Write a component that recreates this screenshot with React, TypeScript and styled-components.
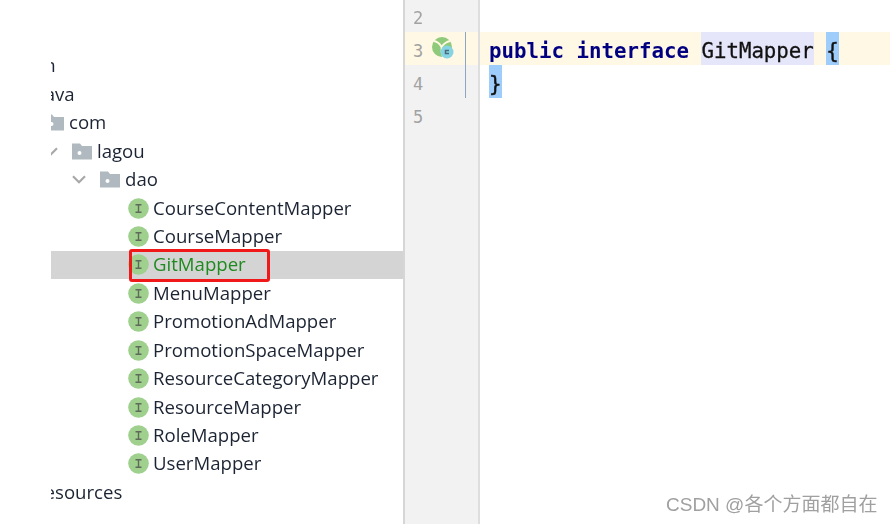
import React from "react";
import styled, { createGlobalStyle } from "styled-components";

const Global = createGlobalStyle`
  html, body { margin: 0; padding: 0; background: #fff; }
  #root { width: 893px; height: 524px; overflow: hidden; }
`;

const Page = styled.div`
  position: relative;
  display: flex;
  width: 893px;
  height: 524px;
  padding-left: 51px;
  padding-right: 3px;
  box-sizing: border-box;
  overflow: hidden;
  background: #fff;
`;

const Tree = styled.div`
  width: 352px;
  flex: none;
  padding-top: 51.6px;
  box-sizing: border-box;
  overflow: hidden;
  font-family: "Open Sans", "Noto Sans", sans-serif;
  font-size: 18.6px;
  color: #1c2433;
  filter: blur(0.3px);
`;

const Row = styled.div<{ $selected?: boolean }>`
  position: relative;
  height: 28.45px;
  background: ${(p) => (p.$selected ? "#d4d4d4" : "transparent")};
`;

const RowInner = styled.div<{ $x: number }>`
  display: flex;
  align-items: center;
  height: 100%;
  margin-left: ${(p) => p.$x}px;
  white-space: nowrap;
`;

const Label = styled.span<{ $selected?: boolean }>`
  margin-top: -2px;
  color: ${(p) => (p.$selected ? "#1f8a1f" : "inherit")};
`;

const ChevronSlot = styled.svg`
  flex: none;
  width: 14px;
  height: 9px;
  margin-right: 14px;
`;

const FolderIcon = styled.svg`
  flex: none;
  width: 20px;
  height: 17px;
  margin-right: 5px;
`;

const InterfaceIcon = styled.svg`
  flex: none;
  width: 21px;
  height: 21px;
  margin-right: 4px;
`;

const SelectBox = styled.div`
  position: absolute;
  left: 78px;
  top: -2px;
  width: 141px;
  height: 33px;
  box-sizing: border-box;
  border: 3px solid #f01818;
  border-radius: 3px;
`;

const Divider = styled.div`
  flex: none;
  width: 2px;
  background: #d6d6d6;
`;

const Editor = styled.div`
  flex: 1;
  display: flex;
  flex-direction: column;
  min-width: 0;
  margin-top: -1px;
  font-family: "DejaVu Sans Mono", "Liberation Mono", monospace;
  filter: blur(0.3px);
`;

const Line = styled.div<{ $fill?: boolean; $current?: boolean }>`
  display: flex;
  flex: ${(p) => (p.$fill ? "1" : "none")};
  height: 33px;
  background: ${(p) => (p.$current ? "#fff8e4" : "transparent")};
`;

const Gutter = styled.div<{ $current?: boolean }>`
  position: relative;
  flex: none;
  width: 75px;
  padding: 3px 0 0 8px;
  box-sizing: border-box;
  border-right: 2px solid #dedede;
  background: ${(p) => (p.$current ? "#fff8e4" : "#f2f2f2")};
`;

const LineNumber = styled.span`
  display: block;
  width: 20px;
  font-size: 17px;
  line-height: 33px;
  color: #a2a2a2;
`;

const RunIcon = styled.svg`
  position: absolute;
  left: 27px;
  top: 5px;
  width: 22px;
  height: 22px;
`;

const Fold = styled.div`
  position: absolute;
  left: 60px;
  top: 0;
  bottom: 0;
  width: 1px;
  background: #8ea6c4;
`;

const Code = styled.div`
  flex: 1;
  height: 33px;
  padding-left: 9px;
  font-size: 20.75px;
  line-height: 38px;
  white-space: pre;
  color: #111;
`;

const Keyword = styled.span`
  font-weight: 700;
  color: #000080;
`;

const Usage = styled.span`
  display: inline-block;
  height: 33px;
  background: #e6e6fa;
  -webkit-text-stroke: 0.3px #111;
`;

const Brace = styled.span`
  display: inline-block;
  height: 33px;
  background: #9fcdfb;
  -webkit-text-stroke: 0.4px #111;
`;

const Watermark = styled.div`
  position: absolute;
  left: 666px;
  top: 493px;
  font-family: "Liberation Sans", "Noto Sans CJK SC", sans-serif;
  font-size: 19px;
  line-height: 24px;
  color: #a0a0a0;
  white-space: nowrap;
`;

const Chevron = () => (
  <ChevronSlot viewBox="0 0 14 9">
    <path d="M1 1.2 L7 7.2 L13 1.2" fill="none" stroke="#a8a8a8" strokeWidth="2.2" />
  </ChevronSlot>
);

const Folder = () => (
  <FolderIcon viewBox="0 0 20 17">
    <path d="M0 0.5 H8 L10 3 H20 V16.5 H0 Z" fill="#afb9bf" />
    <circle cx="7.5" cy="10" r="2" fill="#fff" />
  </FolderIcon>
);

const Interface = () => (
  <InterfaceIcon viewBox="0 0 21 21">
    <circle cx="10.5" cy="10.5" r="10.3" fill="#9fd08e" />
    <path d="M7.5 6 H13.5 V7.4 H11.2 V13.6 H13.5 V15 H7.5 V13.6 H9.8 V7.4 H7.5 Z" fill="#5e6b58" />
  </InterfaceIcon>
);

type Item = { label: string; x: number; kind: "plain" | "folder" | "iface"; chevron?: boolean; selected?: boolean };

const items: Item[] = [
  { label: "main", x: -39, kind: "plain" },
  { label: "java", x: -11, kind: "plain" },
  { label: "com", x: -35, kind: "folder", chevron: true },
  { label: "lagou", x: -7, kind: "folder", chevron: true },
  { label: "dao", x: 21, kind: "folder", chevron: true },
  { label: "CourseContentMapper", x: 77, kind: "iface" },
  { label: "CourseMapper", x: 77, kind: "iface" },
  { label: "GitMapper", x: 77, kind: "iface", selected: true },
  { label: "MenuMapper", x: 77, kind: "iface" },
  { label: "PromotionAdMapper", x: 77, kind: "iface" },
  { label: "PromotionSpaceMapper", x: 77, kind: "iface" },
  { label: "ResourceCategoryMapper", x: 77, kind: "iface" },
  { label: "ResourceMapper", x: 77, kind: "iface" },
  { label: "RoleMapper", x: 77, kind: "iface" },
  { label: "UserMapper", x: 77, kind: "iface" },
  { label: "resources", x: -14, kind: "plain" },
];

export default function App() {
  return (
    <Page>
      <Global />
      <Tree>
        {items.map((it) => (
          <Row key={it.label} $selected={it.selected}>
            <RowInner $x={it.x}>
              {it.chevron && <Chevron />}
              {it.kind === "folder" && <Folder />}
              {it.kind === "iface" && <Interface />}
              <Label $selected={it.selected}>{it.label}</Label>
            </RowInner>
            {it.selected && <SelectBox />}
          </Row>
        ))}
      </Tree>
      <Divider />
      <Editor>
        <Line>
          <Gutter>
            <LineNumber>2</LineNumber>
          </Gutter>
          <Code />
        </Line>
        <Line $current>
          <Gutter $current>
            <LineNumber>3</LineNumber>
            <RunIcon viewBox="0 0 22 22">
              <circle cx="10" cy="10" r="10" fill="#8fc97a" />
              <path d="M2 4 Q7 5 9.5 10 M9.5 10 Q13 5 18 4 M9.5 10 Q9 15 11 20" stroke="#fff8e4" strokeWidth="1.8" fill="none" />
              <circle cx="15" cy="15" r="6.5" fill="#86d3e4" />
              <path d="M17 13.4 H13.5 V16.6 H17" stroke="#4b6a78" strokeWidth="1.5" fill="none" />
            </RunIcon>
            <Fold />
          </Gutter>
          <Code>
            <Keyword>public</Keyword> <Keyword>interface</Keyword> <Usage>GitMapper</Usage> <Brace>{"{"}</Brace>
          </Code>
        </Line>
        <Line>
          <Gutter>
            <LineNumber>4</LineNumber>
            <Fold />
          </Gutter>
          <Code>
            <Brace>{"}"}</Brace>
          </Code>
        </Line>
        <Line $fill>
          <Gutter>
            <LineNumber>5</LineNumber>
          </Gutter>
          <Code />
        </Line>
      </Editor>
      <Watermark>CSDN @各个方面都自在</Watermark>
    </Page>
  );
}
